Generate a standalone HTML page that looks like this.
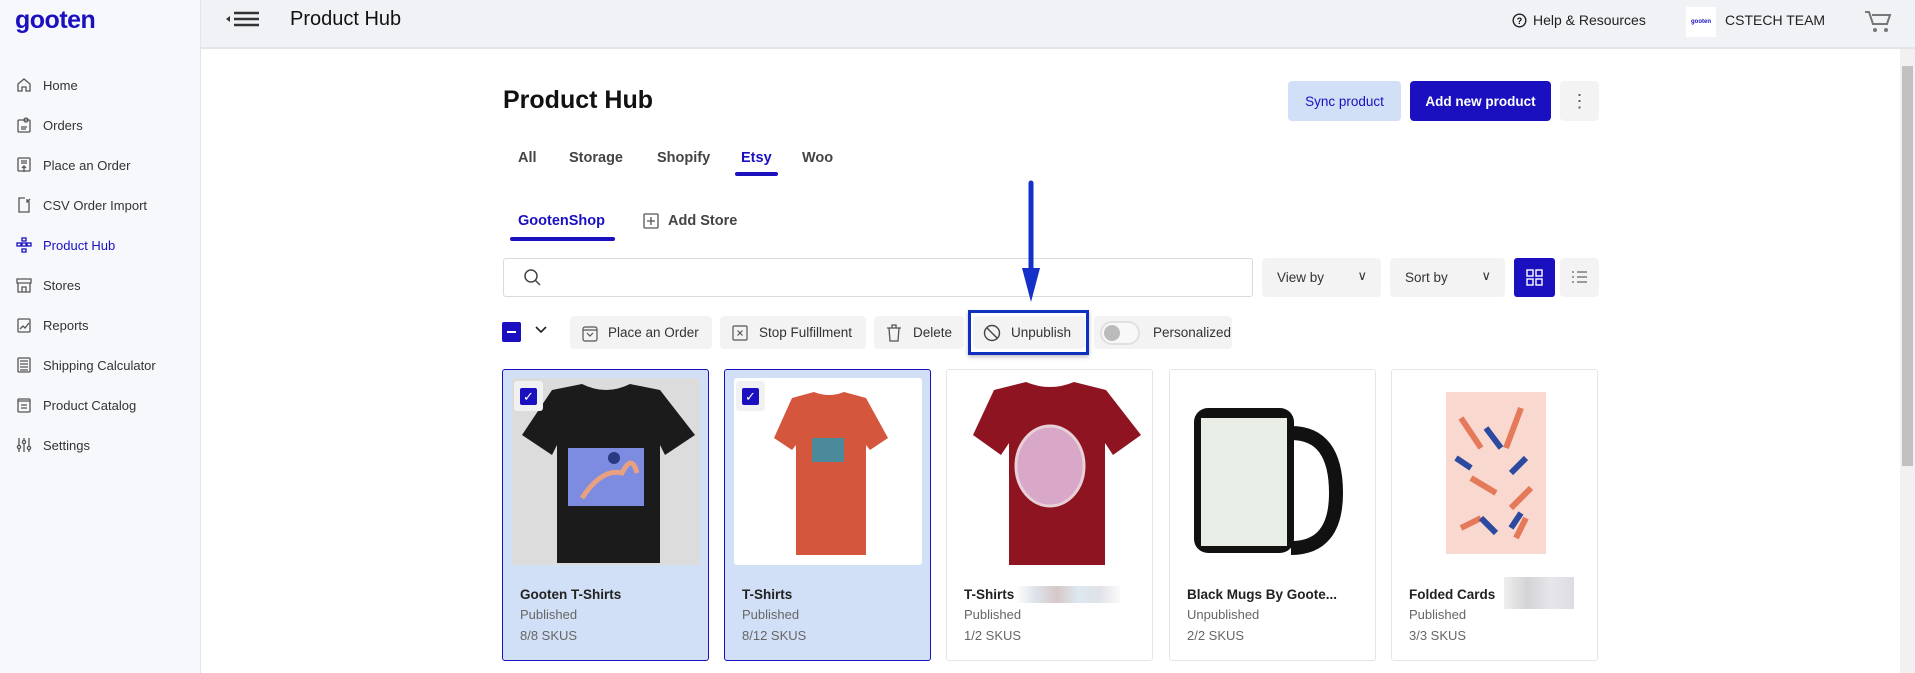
<!DOCTYPE html>
<html><head><meta charset="utf-8"><style>
*{box-sizing:border-box;margin:0;padding:0}
body{width:1915px;height:673px;overflow:hidden;background:#fff;font-family:"Liberation Sans",sans-serif;color:#222;position:relative}
.a{position:absolute}
.side{left:0;top:0;width:201px;height:673px;background:#f7f8fb;border-right:1px solid #e2e4ea}
.hdr{left:201px;top:0;right:0;height:49px;background:#f1f2f6;border-bottom:2px solid #e3e4e8}
.nav{left:16px;font-size:13px;color:#333;display:flex;align-items:center;gap:11px;height:20px}
.nav svg{width:16px;height:16px;fill:none;stroke:#555;stroke-width:1.3}
.btn{background:#f3f3f4;border-radius:4px;display:flex;align-items:center;font-size:13.5px;color:#333}
.card{width:207px;height:292px;top:369px;border:1px solid #e4e5e9;border-radius:3px;background:#fff}
.card.sel{background:#d1e0f6;border:1px solid #1a10c0}
.card .img{position:absolute;left:9px;top:8px;width:188px;height:187px;border-radius:3px;overflow:hidden}
.card .t{position:absolute;left:17px;top:217px;font-size:13.5px;font-weight:bold;color:#222}
.card .s{position:absolute;left:17px;font-size:13px;color:#666}
.chk{position:absolute;left:11px;top:11px;width:29px;height:30px;background:#f1f1f3;border-radius:3px}
.chk div{position:absolute;left:6px;top:7px;width:17px;height:17px;background:#1a10c0;border-radius:2px;color:#fff;font-size:13px;text-align:center;line-height:17px}
.tab{position:absolute;top:150px;font-size:14.5px;color:#444;font-weight:bold}
</style></head><body>
<div class="a side"></div>
<div class="a" style="left:15px;top:6px;font-size:25px;font-weight:bold;color:#1a10c0;letter-spacing:-0.5px">gooten</div>
<div class="a nav" style="top:75px"><svg viewBox="0 0 16 16"><path d="M2 7L8 2l6 5v7h-4v-4H6v4H2z"/></svg>Home</div>
<div class="a nav" style="top:115px"><svg viewBox="0 0 16 16"><rect x="2" y="3" width="12" height="12" rx="1"/><circle cx="10" cy="3" r="2"/><path d="M5 10h6M5 12h5"/></svg>Orders</div>
<div class="a nav" style="top:155px"><svg viewBox="0 0 16 16"><rect x="2" y="1" width="12" height="13" rx="1"/><path d="M5 4h6M5 6h6M8 15V9M6 11l2-2 2 2"/></svg>Place an Order</div>
<div class="a nav" style="top:195px"><svg viewBox="0 0 16 16"><path d="M9 1H3v14h10V6"/><path d="M14 2l-3 3M11 2v3h3"/></svg>CSV Order Import</div>
<div class="a nav" style="top:235px;color:#1a10c0"><svg viewBox="0 0 16 16" style="stroke:#1a10c0"><rect x="6" y="1" width="4" height="3"/><rect x="1" y="6" width="4" height="3"/><rect x="6" y="6" width="4" height="3"/><rect x="11" y="6" width="4" height="3"/><rect x="6" y="12" width="4" height="3"/></svg>Product Hub</div>
<div class="a nav" style="top:275px"><svg viewBox="0 0 16 16"><path d="M1 2h14v4H1zM2 6v9h12V6M6 15v-5h4v5"/></svg>Stores</div>
<div class="a nav" style="top:315px"><svg viewBox="0 0 16 16"><rect x="2" y="2" width="12" height="13" rx="1"/><path d="M4 12l3-3 2 2 4-5"/></svg>Reports</div>
<div class="a nav" style="top:355px"><svg viewBox="0 0 16 16"><rect x="2" y="1" width="12" height="14" rx="1"/><path d="M4 4h8M4 7h8M4 10h8M4 13h8"/></svg>Shipping Calculator</div>
<div class="a nav" style="top:395px"><svg viewBox="0 0 16 16"><rect x="2" y="2" width="12" height="13" rx="1"/><path d="M2 4h12M5 8h6M5 11h6"/></svg>Product Catalog</div>
<div class="a nav" style="top:435px"><svg viewBox="0 0 16 16"><path d="M3 1v14M8 1v14M13 1v14"/><circle cx="3" cy="10" r="1.6" fill="#f7f8fb"/><circle cx="8" cy="5" r="1.6" fill="#f7f8fb"/><circle cx="13" cy="11" r="1.6" fill="#f7f8fb"/></svg>Settings</div>

<div class="a hdr"></div>
<svg class="a" style="left:226px;top:11px" width="34" height="16"><path d="M0 8l4-3v6z" fill="#333"/><path d="M8 2h25M8 8h25M8 14h25" stroke="#333" stroke-width="2.6"/></svg>
<div class="a" style="left:290px;top:8px;font-size:20px;color:#111">Product Hub</div>
<svg class="a" style="left:1512px;top:13px" width="15" height="15"><circle cx="7.5" cy="7.5" r="6.3" fill="none" stroke="#222" stroke-width="1.4"/><text x="7.5" y="11" font-size="9" text-anchor="middle" font-family="Liberation Sans" font-weight="bold">?</text></svg>
<div class="a" style="left:1533px;top:12px;font-size:14px;color:#222">Help &amp; Resources</div>
<div class="a" style="left:1686px;top:7px;width:30px;height:30px;background:#fff;font-size:6px;color:#1a10c0;line-height:30px;text-align:center;font-weight:bold">gooten</div>
<div class="a" style="left:1725px;top:12px;font-size:14px;color:#222">CSTECH TEAM</div>
<svg class="a" style="left:1864px;top:10px" width="28" height="24"><path d="M1 2h4l4 12h14l3-9H8" fill="none" stroke="#777" stroke-width="2"/><circle cx="11" cy="20" r="2" fill="#777"/><circle cx="22" cy="20" r="2" fill="#777"/></svg>
<div class="a" style="left:1900px;top:49px;width:15px;height:624px;background:#f1f1f1"></div>
<div class="a" style="left:1902px;top:66px;width:11px;height:400px;background:#c1c1c1"></div>

<div class="a" style="left:503px;top:86px;font-size:25px;font-weight:bold;color:#111">Product Hub</div>
<div class="a btn" style="left:1288px;top:81px;width:113px;height:40px;background:#d1e0f6;color:#1a10c0;justify-content:center;font-size:13.5px">Sync product</div>
<div class="a btn" style="left:1410px;top:81px;width:141px;height:40px;background:#1a10c0;color:#fff;justify-content:center;font-weight:bold;font-size:13.5px">Add new product</div>
<div class="a btn" style="left:1560px;top:81px;width:39px;height:40px;justify-content:center;font-size:18px;color:#555;line-height:1">⋮</div>

<div class="tab" style="left:518px">All</div>
<div class="tab" style="left:569px">Storage</div>
<div class="tab" style="left:657px">Shopify</div>
<div class="tab" style="left:741px;color:#1a10c0">Etsy</div>
<div class="tab" style="left:802px">Woo</div>
<div class="a" style="left:735px;top:172px;width:43px;height:4px;background:#1a10c0;border-radius:2px"></div>

<div class="a" style="top:213px;left:518px;font-size:14.5px;color:#1a10c0;font-weight:bold">GootenShop</div>
<div class="a" style="left:510px;top:237px;width:105px;height:4px;background:#1a10c0;border-radius:2px"></div>
<svg class="a" style="left:643px;top:213px" width="16" height="16"><rect x="1" y="1" width="14" height="14" rx="1" fill="none" stroke="#555" stroke-width="1.3"/><path d="M8 4v8M4 8h8" stroke="#555" stroke-width="1.3"/></svg>
<div class="a" style="top:213px;left:668px;font-size:14.5px;color:#444;font-weight:bold">Add Store</div>

<div class="a" style="left:503px;top:258px;width:750px;height:39px;border:1px solid #d9dadf;border-radius:3px"></div>
<svg class="a" style="left:523px;top:268px" width="18" height="20"><circle cx="8" cy="8" r="6" fill="none" stroke="#444" stroke-width="1.5"/><path d="M12 12l5 5" stroke="#444" stroke-width="1.5"/></svg>
<div class="a btn" style="left:1262px;top:258px;width:119px;height:39px;padding-left:15px">View by<span style="position:absolute;right:14px;top:10px;font-size:13px">&#x2228;</span></div>
<div class="a btn" style="left:1390px;top:258px;width:115px;height:39px;padding-left:15px">Sort by<span style="position:absolute;right:14px;top:10px;font-size:13px">&#x2228;</span></div>
<div class="a" style="left:1514px;top:258px;width:41px;height:39px;background:#1a10c0;border-radius:3px"></div>
<svg class="a" style="left:1526px;top:269px" width="17" height="17" fill="none" stroke="#fff" stroke-width="1.4"><rect x="1" y="1" width="6" height="6"/><rect x="10" y="1" width="6" height="6"/><rect x="1" y="10" width="6" height="6"/><rect x="10" y="10" width="6" height="6"/></svg>
<div class="a btn" style="left:1560px;top:258px;width:39px;height:39px"></div>
<svg class="a" style="left:1571px;top:270px" width="17" height="15" stroke="#666" stroke-width="1.3"><path d="M1 2h2M6 2h10M1 7h2M6 7h10M1 12h2M6 12h10"/></svg>

<div class="a" style="left:502px;top:322px;width:19px;height:20px;background:#1a10c0;border-radius:2px"><div style="position:absolute;left:5px;top:9px;width:9px;height:2px;background:#fff"></div></div>
<svg class="a" style="left:534px;top:325px" width="14" height="10"><path d="M2 2l5 5 5-5" fill="none" stroke="#222" stroke-width="1.6"/></svg>
<div class="a btn" style="left:570px;top:316px;width:142px;height:33px;padding-left:12px"><svg width="16" height="18" style="margin-right:10px" fill="none" stroke="#555" stroke-width="1.2"><rect x="1" y="3" width="14" height="14" rx="2"/><path d="M1 6h14M5 9l3 3 3-3"/></svg>Place an Order</div>
<div class="a btn" style="left:720px;top:316px;width:146px;height:33px;padding-left:12px"><svg width="16" height="16" style="margin-right:11px" fill="none" stroke="#555" stroke-width="1.2"><rect x="1" y="1" width="14" height="14" rx="1"/><path d="M5.5 5.5l5 5M10.5 5.5l-5 5"/></svg>Stop Fulfillment</div>
<div class="a btn" style="left:874px;top:316px;width:90px;height:33px;padding-left:12px"><svg width="16" height="18" style="margin-right:11px" fill="none" stroke="#555" stroke-width="1.3"><path d="M1 4h14M6 4V1h4v3M3 4l1 13h8l1-13"/></svg>Delete</div>
<div class="a btn" style="left:973px;top:316px;width:112px;height:33px;padding-left:10px"><svg width="18" height="18" style="margin-right:10px" fill="none" stroke="#444" stroke-width="1.4"><circle cx="9" cy="9" r="7.5"/><path d="M4 4l10 10"/></svg>Unpublish</div>
<div class="a" style="left:968px;top:310px;width:121px;height:45px;border:3px solid #1030c0;box-shadow:0 2px 4px rgba(0,0,0,.25)"></div>
<div class="a btn" style="left:1094px;top:316px;width:138px;height:33px;padding-left:6px"><div style="width:40px;height:24px;border:2px solid #e0e0e3;border-radius:12px;background:#f8f8f8;position:relative;margin-right:13px"><div style="position:absolute;left:2px;top:2px;width:16px;height:16px;border-radius:50%;background:#bbb"></div></div>Personalized</div>

<svg class="a" style="left:1020px;top:180px" width="22" height="124"><path d="M11 3v90" stroke="#1530c8" stroke-width="5" stroke-linecap="round"/><path d="M2 88h18l-9 34z" fill="#1530c8"/></svg>

<div class="a card sel" style="left:502px">
 <div class="img" style="background:#dcdcdc"><svg width="188" height="187"><path d="M40 12l30-6q24 12 48 0l30 6 35 45-30 20-5-10v118H45V67l-5 10-30-20z" fill="#1b1b1b"/><rect x="56" y="70" width="76" height="58" fill="#7d8be0"/><path d="M70 120q20-30 40-25 10-20 15 0" stroke="#e7a080" stroke-width="5" fill="none"/><circle cx="102" cy="80" r="6" fill="#2a3a80"/></svg></div>
 <div class="chk"><div>✓</div></div>
 <div class="t">Gooten T-Shirts</div><div class="s" style="top:237px">Published</div><div class="s" style="top:258px">8/8 SKUS</div>
</div>
<div class="a card sel" style="left:724px">
 <div class="img" style="background:#fff"><svg width="188" height="187"><path d="M58 20l22-6q15 6 30 0l22 6 22 40-18 12-4-5v110H62V67l-4 5-18-12z" fill="#d4563c"/><rect x="78" y="60" width="32" height="24" fill="#4a8a9a"/></svg></div>
 <div class="chk"><div>✓</div></div>
 <div class="t">T-Shirts</div><div class="s" style="top:237px">Published</div><div class="s" style="top:258px">8/12 SKUS</div>
</div>
<div class="a card" style="left:946px">
 <div class="img"><svg width="188" height="187"><path d="M38 12l32-8q24 10 48 0l32 8 35 45-28 20-8-12v125H53V65l-8 12-28-20z" fill="#8e1422"/><ellipse cx="94" cy="88" rx="34" ry="40" fill="#d9a8c8" stroke="#e7d0d8" stroke-width="3"/></svg></div>
 <div class="t">T-Shirts</div>
 <div class="a" style="left:68px;top:216px;width:105px;height:17px;background:linear-gradient(90deg,#fff,#dde2ea,#d6c8c8,#dde8f0,#e0e2e8,#fafafa)"></div>
 <div class="s" style="top:237px">Published</div><div class="s" style="top:258px">1/2 SKUS</div>
</div>
<div class="a card" style="left:1169px">
 <div class="img"><svg width="188" height="187"><rect x="15" y="30" width="100" height="145" rx="14" fill="#111"/><rect x="22" y="40" width="86" height="128" fill="#e8ede6"/><path d="M112 55q45 0 45 60 0 55-45 55" stroke="#111" stroke-width="14" fill="none"/></svg></div>
 <div class="t">Black Mugs By Goote...</div><div class="s" style="top:237px">Unpublished</div><div class="s" style="top:258px">2/2 SKUS</div>
</div>
<div class="a card" style="left:1391px">
 <div class="img"><svg width="188" height="187"><rect x="45" y="14" width="100" height="162" fill="#f9d8d0"/><path d="M60 40l20 30M120 30l-15 40M70 100l25 15M130 110l-20 20M60 150l20-10M115 160l10-20" stroke="#e47a5a" stroke-width="6"/><path d="M85 50l15 20M55 80l15 10M125 80l-15 15M80 140l15 15M120 135l-10 15" stroke="#2b4aa0" stroke-width="6"/></svg></div>
 <div class="t">Folded Cards</div>
 <div class="a" style="left:112px;top:207px;width:70px;height:32px;background:linear-gradient(90deg,#eee,#d4d4d8,#e6e6ea,#dcdce4)"></div>
 <div class="s" style="top:237px">Published</div><div class="s" style="top:258px">3/3 SKUS</div>
</div>
</body></html>
